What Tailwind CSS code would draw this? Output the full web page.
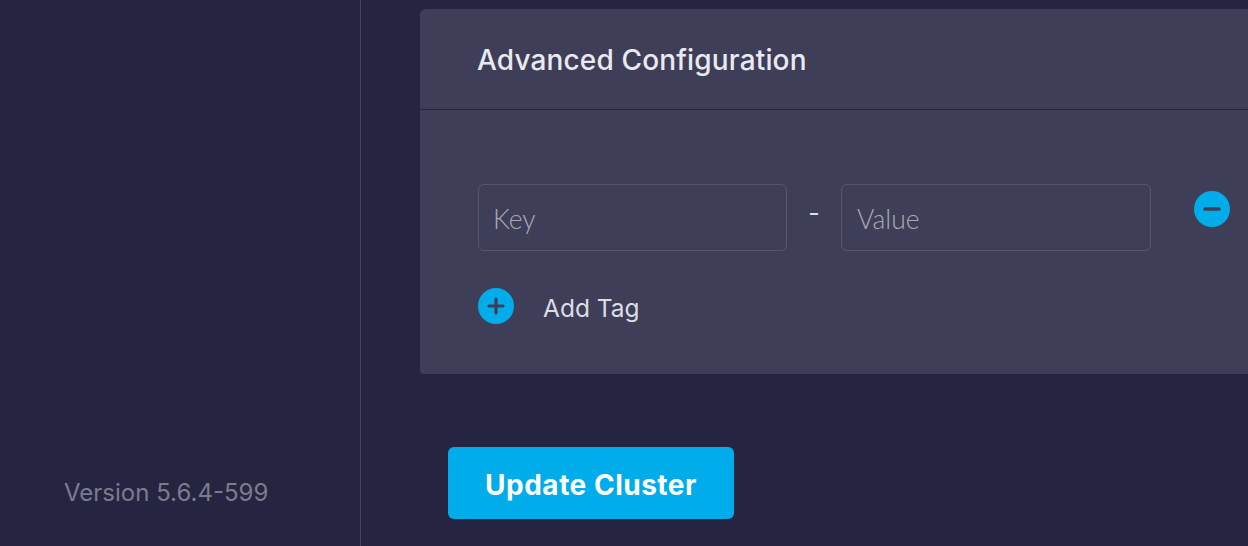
<!DOCTYPE html>
<html lang="en">
<head>
    <meta charset="UTF-8">
    <title>Update Cluster</title>
    <script src="https://cdn.jsdelivr.net/npm/@tailwindcss/browser@4"></script>
</head>
<body class="bg-[#252541] font-['Inter',sans-serif] overflow-hidden">
    <div class="flex h-[546px] w-[1248px]">
        <!-- Sidebar -->
        <aside class="w-[361px] h-full border-r border-[#45455f] flex flex-col justify-end shrink-0">
            <p class="pl-[64px] pb-[38px] text-[24px] leading-[30px] text-[#7b7b8e] font-normal">Version 5.6.4-599</p>
        </aside>

        <!-- Main -->
        <main class="flex-1 pt-[9px]">
            <section class="ml-[59px] h-[365px] bg-[#3f3e58] rounded-tl-[6px] rounded-bl-[4px]">
                <div class="h-[101px] border-b border-[#252541] pl-[57px] pt-[2px] flex items-center">
                    <h2 class="text-[28px] tracking-[0.15px] font-medium text-[#e9e9ef]">Advanced Configuration</h2>
                </div>

                <div class="pl-[58px] pt-[74px]">
                    <div class="flex items-start">
                        <input placeholder="Key" class="w-[309px] h-[67px] px-[14px] pt-[2px] rounded-[6px] border border-[#57566e] bg-transparent text-[26.5px] font-['Lato',sans-serif] font-light placeholder:text-[#a9a9b6]">
                        <span class="w-[54px] text-center pt-[14px] text-[25px] leading-[30px] text-[#dcdce4]">-</span>
                        <input placeholder="Value" class="w-[310px] h-[67px] px-[15px] pt-[2px] rounded-[6px] border border-[#57566e] bg-transparent text-[26.5px] font-['Lato',sans-serif] font-light placeholder:text-[#a9a9b6]">
                        <button class="ml-[43px] mt-[7px] w-[36px] h-[36px] rounded-full bg-[#00acea] flex items-center justify-center">
                            <svg width="18" height="18" viewBox="0 0 18 18"><path d="M2 9h14" stroke="#3f3e58" stroke-width="3.4" stroke-linecap="round"/></svg>
                        </button>
                    </div>

                    <div class="flex items-start mt-[37px]">
                        <button class="w-[36px] h-[36px] rounded-full bg-[#00acea] flex items-center justify-center">
                            <svg width="18" height="18" viewBox="0 0 18 18"><path d="M2 9h14M9 2v14" stroke="#3f3e58" stroke-width="3.2" stroke-linecap="round"/></svg>
                        </button>
                        <span class="ml-[29px] mt-[5px] text-[24.5px] leading-[30px] text-[#dcdce4]">Add Tag</span>
                    </div>
                </div>
            </section>

            <button class="block ml-[87px] mt-[73px] pt-[4px] w-[286px] h-[72px] rounded-[6px] bg-[#00acea] text-white text-[28px] tracking-[0.5px] font-bold">Update Cluster</button>
        </main>
    </div>
</body>
</html>
